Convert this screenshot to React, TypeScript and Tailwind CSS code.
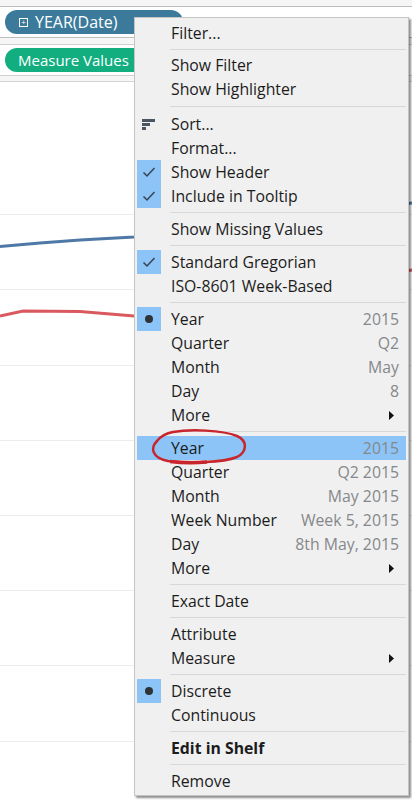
import { Fragment } from 'react'

type Item = {
  label?: string
  value?: string
  mark?: 'check' | 'dot' | 'sort'
  more?: boolean
  bold?: boolean
  active?: boolean
  sep?: 'short' | 'tall' | 'normal'
}

const items: Item[] = [
  { label: 'Filter...' },
  { sep: 'short' },
  { label: 'Show Filter' },
  { label: 'Show Highlighter' },
  { sep: 'tall' },
  { label: 'Sort...', mark: 'sort' },
  { label: 'Format...' },
  { label: 'Show Header', mark: 'check' },
  { label: 'Include in Tooltip', mark: 'check' },
  { sep: 'normal' },
  { label: 'Show Missing Values' },
  { sep: 'normal' },
  { label: 'Standard Gregorian', mark: 'check' },
  { label: 'ISO-8601 Week-Based' },
  { sep: 'normal' },
  { label: 'Year', value: '2015', mark: 'dot' },
  { label: 'Quarter', value: 'Q2' },
  { label: 'Month', value: 'May' },
  { label: 'Day', value: '8' },
  { label: 'More', more: true },
  { sep: 'normal' },
  { label: 'Year', value: '2015', active: true },
  { label: 'Quarter', value: 'Q2 2015' },
  { label: 'Month', value: 'May 2015' },
  { label: 'Week Number', value: 'Week 5, 2015' },
  { label: 'Day', value: '8th May, 2015' },
  { label: 'More', more: true },
  { sep: 'normal' },
  { label: 'Exact Date' },
  { sep: 'normal' },
  { label: 'Attribute' },
  { label: 'Measure', more: true },
  { sep: 'normal' },
  { label: 'Discrete', mark: 'dot' },
  { label: 'Continuous' },
  { sep: 'normal' },
  { label: 'Edit in Shelf', bold: true },
  { sep: 'normal' },
  { label: 'Remove' },
]

function Mark({ kind }: { kind: Item['mark'] }) {
  if (kind === 'sort') {
    return (
      <div className="flex h-6 w-6 flex-col items-start justify-center gap-[1px] pl-[5px]">
        <div className="h-[3px] w-[13px] bg-[#4a5563]" />
        <div className="h-[3px] w-[8px] bg-[#4a5563]" />
        <div className="h-[3px] w-[4px] bg-[#4a5563]" />
      </div>
    )
  }
  return (
    <div className="flex h-6 w-6 items-center justify-center bg-[#8cc4f7]">
      {kind === 'check' ? (
        <svg width="14" height="12" viewBox="0 0 14 12" fill="none">
          <path d="M1.5 6.5 L5 10 L12.5 2" stroke="#37424f" strokeWidth="1.5" />
        </svg>
      ) : (
        <div className="h-2 w-2 rounded-full bg-[#2f3338]" />
      )}
    </div>
  )
}

function Row({ item }: { item: Item }) {
  return (
    <div className={`flex h-6 items-center ${item.active ? 'bg-[#8cc4f7]' : ''}`}>
      <div className="h-6 w-6 shrink-0">{item.mark && <Mark kind={item.mark} />}</div>
      <span className={`ml-[10px] flex-1 whitespace-nowrap text-[#1c1c1c] ${item.bold ? 'font-bold' : ''}`}>
        {item.label}
      </span>
      {item.value && <span className="pr-[7px] whitespace-nowrap text-[#85888b]">{item.value}</span>}
      {item.more && (
        <svg className="mr-[12px]" width="5" height="9" viewBox="0 0 5 9">
          <path d="M0 0 L5 4.5 L0 9 Z" fill="#111" />
        </svg>
      )}
    </div>
  )
}

function Separator({ size }: { size: Item['sep'] }) {
  const height = size === 'short' ? 'h-[8px]' : size === 'tall' ? 'h-[11px]' : 'h-[9px]'
  return (
    <div className={`flex items-center pl-[33px] ${height}`}>
      <div className="h-px w-full bg-[#d8d8d8]" />
    </div>
  )
}

export default function App() {
  return (
    <div className="relative h-[801px] w-[412px] overflow-hidden bg-white font-['Open_Sans',sans-serif] text-[15.8px]">
      <div className="h-[6px] bg-[#f6f6f6]" />
      <div className="flex h-[32px] items-center border-y border-[#bdbdbd] pl-[5px]">
        <div className="flex h-6 w-[178px] items-center rounded-full bg-[#3b7a9b] pl-[14px] text-[16px] text-white">
          <div className="mr-[7px] flex h-[9px] w-[9px] items-center justify-center border border-white text-[8px] leading-none">+</div>
          YEAR(Date)
        </div>
      </div>
      <div className="h-[6px] bg-[#f6f6f6]" />
      <div className="flex h-[32px] items-center border-y border-[#cfcfcf] pl-[5px]">
        <div className="flex h-6 w-[160px] items-center rounded-full bg-[#12ae7f] pl-[13px] text-[15px] text-white">
          Measure Values
        </div>
      </div>
      <div className="h-[6px] border-b border-[#d4d4d4] bg-[#f6f6f6]" />

      <div className="flex flex-col pt-[58px]">
        {[0, 1, 2, 3, 4, 5, 6, 7, 8].map((i) => (
          <div key={i} className="h-[75.2px] border-b border-[#ececec]" />
        ))}
      </div>

      <svg className="absolute inset-0" width="412" height="801" fill="none">
        <path d="M0 246.5 L40 243 L80 240 L134 237 L412 203" stroke="#4e79a7" strokeWidth="3" />
        <path d="M0 316 L23 311 L80 311.5 L134 316 L412 270" stroke="#d9595f" strokeWidth="3" />
      </svg>

      <div className="absolute left-[134px] top-[17px] w-[275px] border border-[#c4c4c4] bg-[#f0f0f0] pb-[2px] pl-[2px] pr-[2px] pt-[3px] leading-6 shadow-[2px_2px_2px_rgba(0,0,0,0.45)]">
        {items.map((item, i) => (
          <Fragment key={i}>
            {item.sep ? <Separator size={item.sep} /> : <Row item={item} />}
          </Fragment>
        ))}
      </div>

      <svg className="absolute inset-0" width="412" height="801" fill="none">
        <path
          d="M173 432 C190 429 222 430 237 436 C248 441 247 452 237 457 C222 463 190 463 168 461 C152 458 150 448 157 441 C161 436 167 433 173 432 Z"
          stroke="#c8262c"
          strokeWidth="2.5"
        />
        <path d="M170 461.5 C182 463 196 463 207 462" stroke="#c8262c" strokeWidth="3.5" />
      </svg>
    </div>
  )
}
